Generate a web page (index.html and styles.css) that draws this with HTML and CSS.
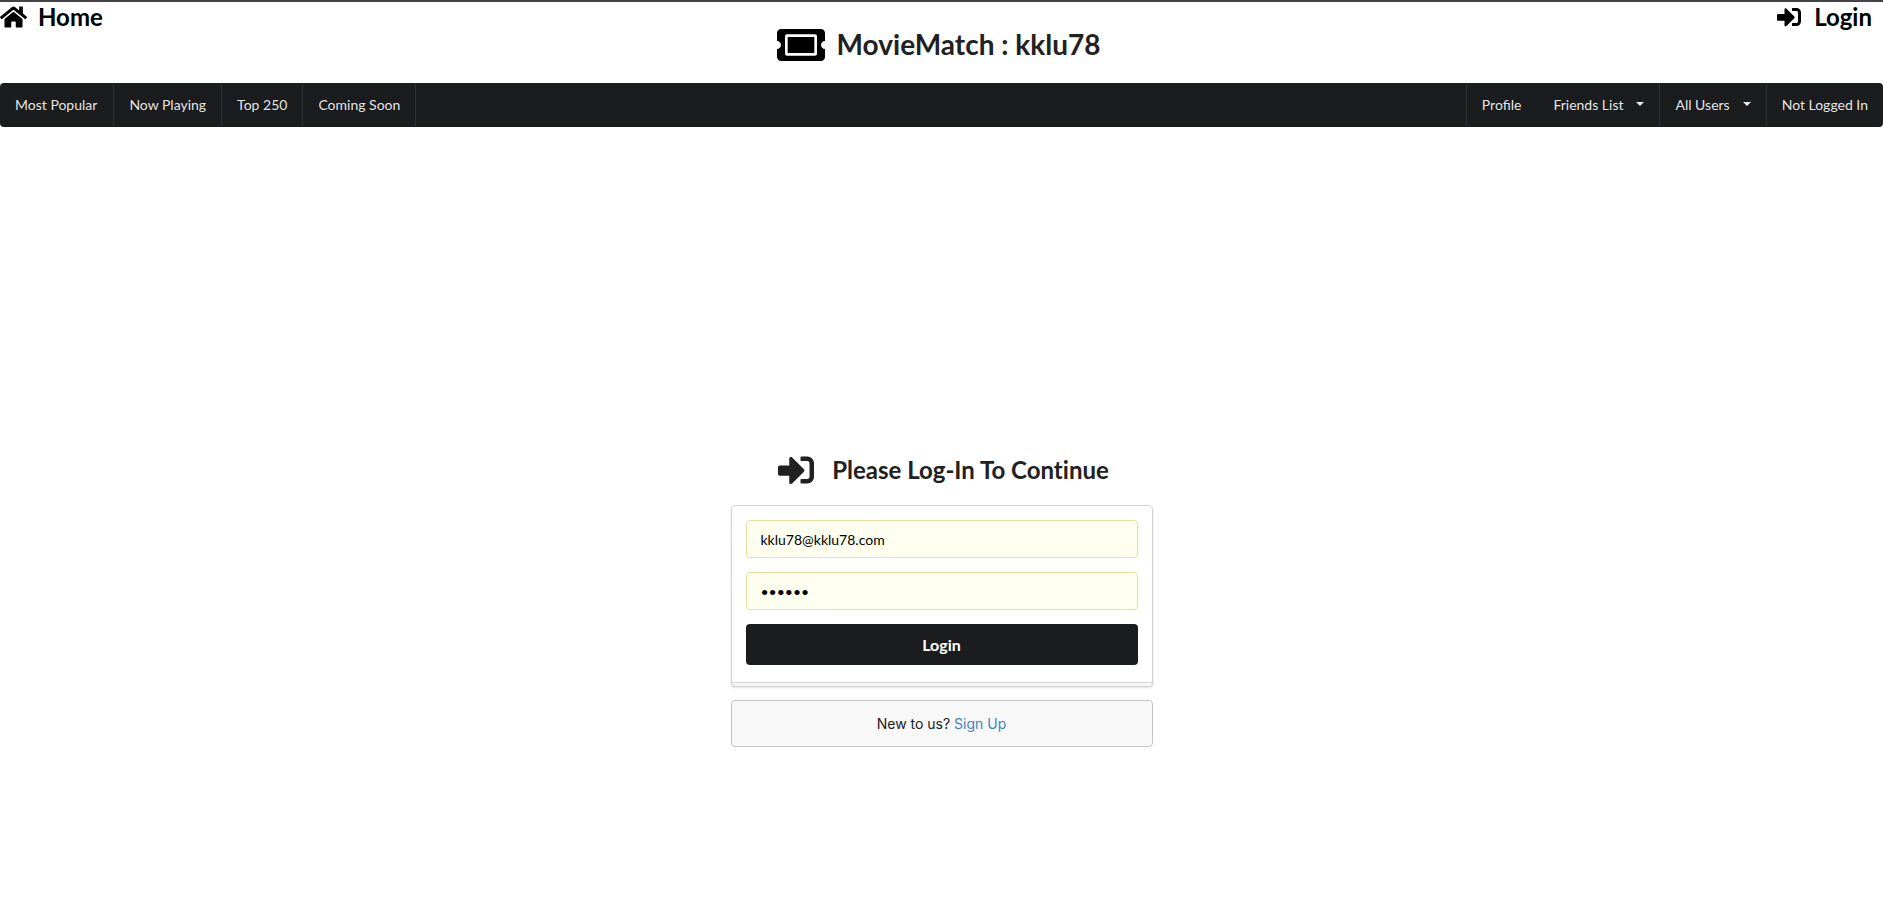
FILE: index.html
```html
<!DOCTYPE html>
<html lang="en">
<head>
<meta charset="utf-8">
<title>MovieMatch</title>
<link rel="stylesheet" href="styles.css">
</head>
<body>
<header class="top">
  <a class="top-link" href="#home">
    <svg class="icon-home" viewBox="0 0 576 512" aria-hidden="true"><path d="M280.37 148.26L96 300.11V464a16 16 0 0 0 16 16l112.06-.29a16 16 0 0 0 15.92-16V368a16 16 0 0 1 16-16h64a16 16 0 0 1 16 16v95.64a16 16 0 0 0 16 16.05L464 480a16 16 0 0 0 16-16V300L295.67 148.26a12.19 12.19 0 0 0-15.3 0zM571.6 251.47L488 182.56V44.05a12 12 0 0 0-12-12h-56a12 12 0 0 0-12 12v72.61L318.47 43a48 48 0 0 0-61 0L4.34 251.47a12 12 0 0 0-1.6 16.9l25.5 31A12 12 0 0 0 45.15 301l235.22-193.74a12.19 12.19 0 0 1 15.3 0L530.9 301a12 12 0 0 0 16.9-1.6l25.5-31a12 12 0 0 0-1.7-16.93z"/></svg>
    <span>Home</span>
  </a>
  <h1 class="brand">
    <svg class="icon-ticket" viewBox="0 0 576 384" aria-hidden="true"><path d="M128 96h320v192H128zM528 192c0 26.510 21.490 48 48 48v96c0 26.510-21.490 48-48 48H48c-26.510 0-48-21.490-48-48v-96c26.510 0 48-21.490 48-48s-21.490-48-48-48V48C0 21.490 21.490 0 48 0h480c26.510 0 48 21.490 48 48v96c-26.510 0-48 21.490-48 48zM480 88c0-13.255-10.745-24-24-24H120c-13.255 0-24 10.745-24 24v208c0 13.255 10.745 24 24 24h336c13.255 0 24-10.745 24-24V88z" fill-rule="evenodd"/></svg>
    <span>MovieMatch : kklu78</span>
  </h1>
  <a class="top-link top-login" href="#login">
    <svg class="icon-login" viewBox="0 0 512 512" aria-hidden="true"><path d="M416 448h-84c-6.600 0-12-5.400-12-12v-40c0-6.600 5.400-12 12-12h84c17.700 0 32-14.300 32-32V160c0-17.700-14.300-32-32-32h-84c-6.600 0-12-5.400-12-12V76c0-6.600 5.400-12 12-12h84c53 0 96 43 96 96v192c0 53-43 96-96 96zm-47-201L201 79c-15-15-41-4.500-41 17v96H24c-13.300 0-24 10.700-24 24v96c0 13.300 10.700 24 24 24h136v96c0 21.500 26 32 41 17l168-168c9.300-9.400 9.300-24.600 0-34z"/></svg>
    <span>Login</span>
  </a>
</header>
<nav class="menu">
  <a class="item" href="#popular">Most Popular</a>
  <a class="item" href="#playing">Now Playing</a>
  <a class="item" href="#top">Top 250</a>
  <a class="item" href="#soon">Coming Soon</a>
  <div class="menu-right">
    <a class="item item-plain" href="#profile">Profile</a>
    <button class="item" type="button">Friends List<span class="caret"></span></button>
    <button class="item" type="button">All Users<span class="caret"></span></button>
    <a class="item item-last" href="#account">Not Logged In</a>
  </div>
</nav>
<main class="content">
  <div class="column">
    <h2 class="title">
      <svg class="icon-title" viewBox="0 0 512 512" aria-hidden="true"><path d="M416 448h-84c-6.600 0-12-5.400-12-12v-40c0-6.600 5.400-12 12-12h84c17.700 0 32-14.300 32-32V160c0-17.700-14.300-32-32-32h-84c-6.600 0-12-5.400-12-12V76c0-6.600 5.400-12 12-12h84c53 0 96 43 96 96v192c0 53-43 96-96 96zm-47-201L201 79c-15-15-41-4.500-41 17v96H24c-13.300 0-24 10.700-24 24v96c0 13.300 10.700 24 24 24h136v96c0 21.500 26 32 41 17l168-168c9.300-9.400 9.300-24.600 0-34z"/></svg>
      <span>Please Log-In To Continue</span>
    </h2>
    <form class="card">
      <input class="field" type="email" aria-label="E-mail address" value="kklu78@kklu78.com">
      <input class="field" type="password" aria-label="Password" value="kklu78">
      <button class="submit" type="button">Login</button>
    </form>
    <p class="message">New to us? <a class="signup" href="#signup">Sign Up</a></p>
  </div>
</main>
</body>
</html>
```
FILE: styles.css
```css
*, *::after { box-sizing: border-box; }
body {
  margin: 0;
  min-height: 100vh;
  display: flex;
  flex-direction: column;
  border-top: 2px solid #454349;
  background: #fff;
  color: #212121;
  font-family: Lato, "Liberation Sans", sans-serif;
  font-size: 14px;
}
svg { display: block; fill: currentColor; flex: none; }
h1, h2, p { margin: 0; }
a { text-decoration: none; }

.top {
  display: grid;
  grid-template-columns: 1fr auto 1fr;
  align-items: start;
  padding-bottom: 22px;
}
.top-link {
  display: flex;
  align-items: center;
  gap: 11px;
  height: 29px;
  color: #000;
  font-size: 24px;
  line-height: 28px;
  font-weight: 700;
}
.top-login { justify-self: end; gap: 13px; padding-right: 11px; }
.icon-home { width: 27px; height: 24px; }
.icon-login { width: 24px; height: 24px; }
.brand {
  display: flex;
  align-items: end;
  gap: 12px;
  padding: 25px 6px 0 0;
  font-size: 28px;
  line-height: 34px;
}
.icon-ticket { width: 48px; height: 32px; color: #000; }

.menu {
  display: flex;
  height: 44px;
  border-radius: 4px;
  background: #1b1c1d;
}
.menu-right { display: flex; margin-left: auto; border-left: 1px solid #2e2f30; }
.item {
  display: flex;
  align-items: center;
  padding: 0 15px 2px;
  border: 0;
  border-right: 1px solid #2e2f30;
  background: none;
  color: rgba(255, 255, 255, 0.9);
  font: inherit;
}
.item:first-child { padding-right: 16px; }
.item-plain { border-right-color: transparent; }
.item-last { border-right: 0; }
.caret {
  margin-left: 13px;
  border: 4px solid transparent;
  border-top-color: currentColor;
  border-bottom: 0;
}

.content { flex: 1; display: grid; place-items: center; padding-top: 150px; }
.column { width: 100%; max-width: 422px; }
.title {
  display: flex;
  align-items: center;
  justify-content: center;
  gap: 18px;
  margin-bottom: 17px;
  padding-left: 4px;
  font-size: 24px;
  line-height: 36px;
  font-variant-ligatures: no-common-ligatures;
}
.icon-title { width: 36px; height: 36px; }
.card {
  position: relative;
  display: flex;
  flex-direction: column;
  gap: 14px;
  margin-bottom: 17px;
  padding: 14px 14px 17px;
  border: 1px solid #d4d4d5;
  border-radius: 4px 4px 0 0;
  box-shadow: 0 1px 2px rgba(34, 36, 38, 0.15);
}
.card::after {
  content: "";
  position: absolute;
  top: 100%;
  left: -1px;
  right: -1px;
  height: 5px;
  border: 1px solid #d4d4d5;
  border-radius: 0 0 4px 4px;
  background: #f6f6f6;
  box-shadow: 0 1px 2px rgba(34, 36, 38, 0.15);
}
.field {
  width: 100%;
  height: 38px;
  padding: 2px 14px 0;
  border: 1px solid #e5dfa1;
  border-radius: 4px;
  outline: 0;
  background: #fffff0;
  color: #000;
  font: inherit;
}
.submit {
  height: 41px;
  flex: none;
  border: 0;
  border-radius: 4px;
  background: #1b1c1d;
  color: #fff;
  font: inherit;
  font-size: 16px;
  font-weight: 700;
}
.message {
  border: 1px solid #c6c6c7;
  border-radius: 4px;
  background: #f8f8f9;
  font-family: Inter, "Liberation Sans", sans-serif;
  font-size: 14px;
  line-height: 45px;
  text-align: center;
}
.signup { color: #4183c4; }
```
